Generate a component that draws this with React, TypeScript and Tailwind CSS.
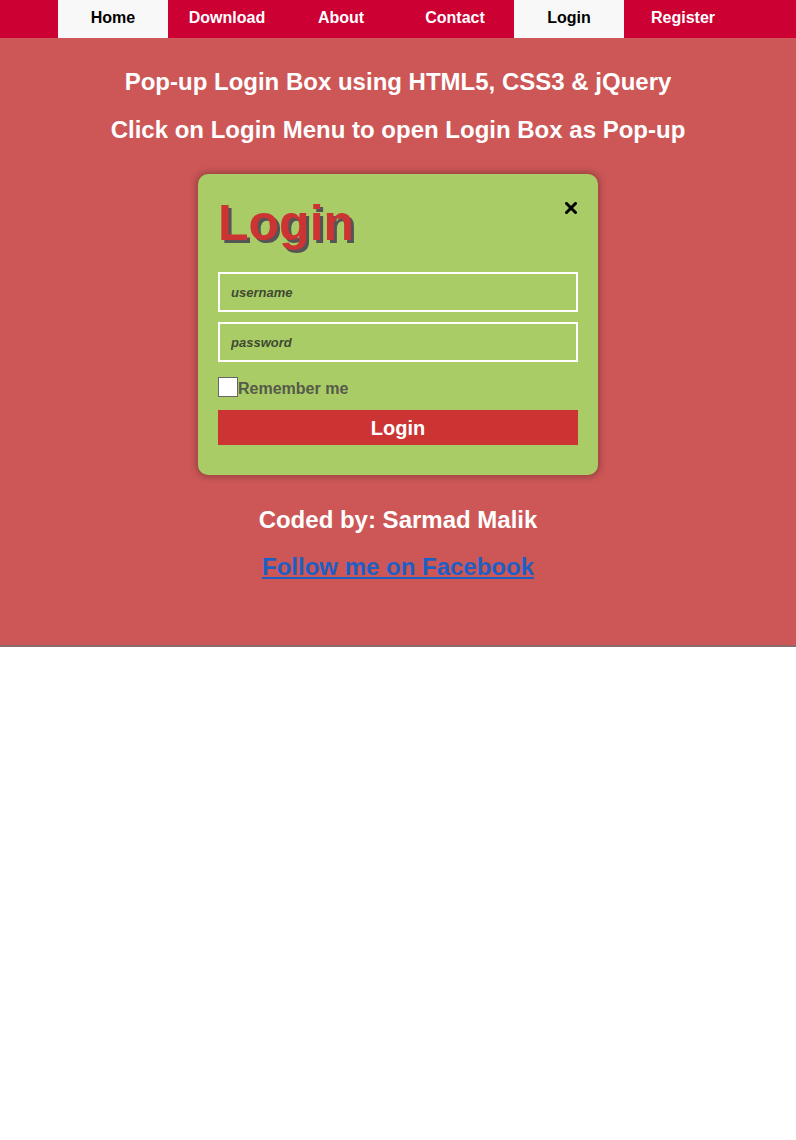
export default function App() {
  const menu = ["Home", "Download", "About", "Contact", "Login", "Register"]
  const active = ["Home", "Login"]

  return (
    <div className="min-h-[1140px] bg-white" style={{ fontFamily: '"Liberation Sans", Arial, sans-serif' }}>
      <nav className="flex h-[38px] justify-center gap-1 bg-[#cc0033]">
        {menu.map((item) => (
          <a
            key={item}
            href="#"
            className={
              "flex w-[110px] items-center justify-center pb-[2px] text-[16px] font-bold " +
              (active.includes(item) ? "bg-[#f8f8f8] text-black" : "text-white")
            }
          >
            {item}
          </a>
        ))}
      </nav>

      <main className="h-[609px] border-b-2 border-[#8a6a6a] bg-[#cd5757] pt-[29px]">
        <h2 className="text-center text-[24px] font-bold leading-[30px] text-white">
          Pop-up Login Box using HTML5, CSS3 &amp; jQuery
        </h2>
        <h2 className="mt-[18px] text-center text-[24px] font-bold leading-[30px] text-white">
          Click on Login Menu to open Login Box as Pop-up
        </h2>

        <div className="relative mx-auto mt-[29px] w-[400px] rounded-[10px] bg-[#aacc66] px-5 pb-[30px] pt-[18px] shadow-[0_0_6px_2px_rgba(90,40,40,0.45)]">
          <button className="absolute right-[21px] top-[28px] text-black" aria-label="close">
            <svg width="12" height="12" viewBox="0 0 12 12">
              <path d="M1.5 1.5 L10.5 10.5 M10.5 1.5 L1.5 10.5" stroke="black" strokeWidth="3" strokeLinecap="square" />
            </svg>
          </button>

          <h1 className="text-[50px] font-bold leading-[62px] text-[#cc3333] [text-shadow:3px_3px_0_#555]">
            Login
          </h1>

          <div className="mt-[18px] flex flex-col gap-[10px]">
            <input
              type="text"
              placeholder="username"
              className="h-[40px] w-full border-2 border-white bg-transparent px-[11px] text-[13px] font-bold italic text-[#444] outline-none placeholder:text-[#3f4a33]"
            />
            <input
              type="password"
              placeholder="password"
              className="h-[40px] w-full border-2 border-white bg-transparent px-[11px] text-[13px] font-bold italic text-[#444] outline-none placeholder:text-[#3f4a33]"
            />
          </div>

          <label className="mt-[14px] flex items-center text-[16px] font-bold leading-[19px] text-[#555a4a]">
            <span className="h-[20px] w-[20px] border border-[#666] bg-white" />
            <span className="pt-[3px]">Remember me</span>
          </label>

          <button className="mt-[12px] h-[35px] w-full bg-[#cc3333] text-[20px] font-bold text-white">
            Login
          </button>
        </div>

        <p className="mt-[30px] text-center text-[24px] font-bold leading-[30px] text-white">
          Coded by: Sarmad Malik
        </p>
        <p className="mt-[17px] text-center">
          <a href="#" className="text-[24px] font-bold leading-[30px] text-[#1d5fc4] underline">
            Follow me on Facebook
          </a>
        </p>
      </main>
    </div>
  )
}
